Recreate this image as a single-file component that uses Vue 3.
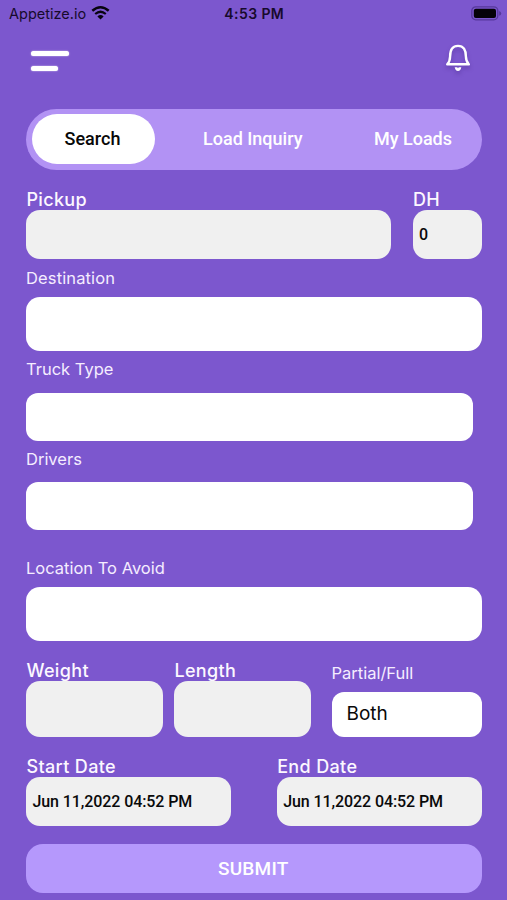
<script setup>
import { ref } from 'vue'

const tabs = ['Search', 'Load Inquiry', 'My Loads']
const activeTab = ref('Search')
</script>

<template>
  <main class="screen">
    <header class="status">
      <div class="carrier">
        <span>Appetize.io</span>
        <svg class="wifi" width="19" height="14" viewBox="0 0 19 14">
          <path d="M1.3 4.8Q9.5 -2.2 17.7 4.8" fill="none" stroke="#08040f" stroke-width="2.5" />
          <path d="M4.2 8Q9.5 3.5 14.8 8" fill="none" stroke="#08040f" stroke-width="2.2" />
          <path d="M6.4 10.4Q9.5 7.8 12.6 10.4L9.5 13.6Z" fill="#08040f" />
        </svg>
      </div>
      <span class="time">4:53 PM</span>
      <svg class="battery" width="31" height="15" viewBox="0 0 31 15">
        <rect x="0.8" y="0.8" width="26" height="13" rx="4" fill="none" stroke="#56399b" stroke-width="1.3" />
        <rect x="2.8" y="2.7" width="22.2" height="9.2" rx="2" fill="#050208" />
        <path d="M28.2 5v4.8q2-.8 2-2.4t-2-2.4z" fill="#56399b" />
      </svg>
    </header>

    <nav class="toolbar">
      <button class="menu" aria-label="Menu"><i></i><i></i></button>
      <svg class="bell" width="28" height="32" viewBox="0 0 28 32">
        <path d="M3.2 21.3Q6 18.500 6.100 13.500C6.100 7 8.400 2.900 14 2.900S21.900 7 21.900 13.500Q22 18.500 24.800 21.300Z" fill="none" stroke="#fff" stroke-width="2.4" stroke-linejoin="round" />
        <path d="M10.7 24.300H17.300Q16.700 28 14 28T10.700 24.300Z" fill="#fff" />
        <path d="M12.7 24.200H15.300L14 25.300Z" fill="#7c57ce" />
      </svg>
    </nav>

    <div class="tabs">
      <button v-for="tab in tabs" :key="tab" :class="['tab', { active: tab === activeTab }]" @click="activeTab = tab">
        {{ tab }}
      </button>
    </div>

    <form @submit.prevent>
      <div class="row pickup-row">
        <div class="field pickup">
          <label class="strong">Pickup</label>
          <div class="box grey"></div>
        </div>
        <div class="field dh">
          <label class="strong">DH</label>
          <div class="box grey">0</div>
        </div>
      </div>

      <div class="field destination">
        <label>Destination</label>
        <div class="box white"></div>
      </div>
      <div class="field select">
        <label>Truck Type</label>
        <div class="box white"></div>
      </div>
      <div class="field select">
        <label>Drivers</label>
        <div class="box white"></div>
      </div>
      <div class="field location">
        <label>Location To Avoid</label>
        <div class="box white"></div>
      </div>

      <div class="row size-row">
        <div class="field size">
          <label class="strong">Weight</label>
          <div class="box grey"></div>
        </div>
        <div class="field size">
          <label class="strong">Length</label>
          <div class="box grey"></div>
        </div>
        <div class="field load">
          <label>Partial/Full</label>
          <div class="box white">Both</div>
        </div>
      </div>

      <div class="row date-row">
        <div class="field">
          <label class="strong">Start Date</label>
          <div class="box grey">Jun 11,2022 04:52 PM</div>
        </div>
        <div class="field">
          <label class="strong">End Date</label>
          <div class="box grey">Jun 11,2022 04:52 PM</div>
        </div>
      </div>

      <button class="submit" type="submit">SUBMIT</button>
    </form>
  </main>
</template>

<style>
body {
  background: #7c57ce;
}
</style>

<style scoped>
* {
  box-sizing: border-box;
}
.screen {
  height: 900px;
  overflow: hidden;
  padding: 0 25.5px 0 26px;
  background: #7c57ce;
  font-family: Inter, "Liberation Sans", sans-serif;
  color: #fff;
}
button {
  border: 0;
  padding: 0;
  background: none;
  font: inherit;
  color: inherit;
}
.status {
  display: grid;
  grid-template-columns: 1fr auto 1fr;
  align-items: center;
  height: 27px;
  margin: 0 -19px 0 -17px;
  color: #170a2c;
  font-size: 14.5px;
}
.carrier {
  display: flex;
  align-items: center;
  gap: 5px;
}
.time {
  padding-right: 1px;
  font-size: 14px;
  font-weight: 600;
  letter-spacing: 0.4px;
}
.wifi {
  margin-top: -1px;
}
.battery {
  justify-self: end;
  margin-right: -1px;
}
.toolbar {
  display: flex;
  justify-content: space-between;
  height: 81.5px;
  padding: 15.7px 10px 0 4px;
}
.menu {
  display: flex;
  flex-direction: column;
  gap: 10px;
  width: 40px;
  height: 35px;
  padding: 8px 0 0 1px;
}
.menu i {
  width: 38px;
  height: 5px;
  border-radius: 3px;
  background: #fff;
  box-shadow: 0 0 1.5px #f4ecff;
}
.menu i + i {
  width: 27px;
}
.bell {
  filter: drop-shadow(0 3px 2px rgba(50, 20, 110, 0.3));
}
.tabs {
  display: flex;
  align-items: center;
  height: 61px;
  padding: 0 6px 1px;
  border-radius: 31px;
  background: #b292f4;
  font-family: Roboto, sans-serif;
  font-size: 18px;
  font-weight: 500;
  letter-spacing: 0.1px;
}
.tab {
  flex: 0 0 123px;
  height: 50px;
  padding: 0 2px 1px 0;
  border-radius: 25px;
}
.tab:nth-child(2) {
  flex: 1;
  padding-right: 0;
}
.tab:nth-child(3) {
  flex: 0 0 125px;
  padding-right: 0;
}
.active {
  background: #fff;
  color: #080808;
}
.row {
  display: flex;
}
.field {
  display: flex;
  flex-direction: column;
}
label {
  display: block;
  height: 38px;
  line-height: 38px;
  font-size: 16.5px;
  white-space: nowrap;
  color: #f5edff;
}
.strong {
  height: 22px;
  padding-left: 0.4px;
  line-height: 23px;
  font-size: 18px;
  font-weight: 500;
  letter-spacing: 0.36px;
  color: #fcf8ff;
}
.box {
  display: flex;
  align-items: center;
  height: 54px;
  border-radius: 14px;
  background: #fff;
  color: #090909;
  white-space: nowrap;
}
.grey {
  height: 49px;
  padding-left: 6.5px;
  background: #f0f0f0;
  font-family: Roboto, sans-serif;
  font-size: 16px;
  font-weight: 500;
  letter-spacing: -0.09px;
}
.pickup-row {
  justify-content: space-between;
  margin-top: 18.5px;
}
.pickup {
  width: 364.5px;
}
.dh {
  width: 69px;
}
.pickup-row label {
  height: 22px;
}
.destination {
  height: 92px;
}
.destination label {
  letter-spacing: 0.13px;
}
.select {
  width: 447px;
  height: 89.5px;
}
.select label {
  height: 42px;
  line-height: 36px;
}
.select .box {
  height: 48px;
  border-radius: 12px;
}
.location {
  padding-top: 18.5px;
}
.size-row {
  align-items: flex-end;
  height: 96px;
}
.size {
  width: 137px;
  margin-right: 11px;
}
.size .box {
  height: 56px;
}
.size .strong {
  line-height: 24px;
}
.load {
  flex: 1;
  margin-left: 9.5px;
}
.load .box {
  height: 45px;
  padding: 0 15px 2px;
  border-radius: 12px;
  font-size: 19px;
}
.date-row {
  gap: 46px;
  padding-top: 18.5px;
}
.date-row .strong {
  line-height: 24px;
}
.date-row .field {
  flex: 1;
}
.submit {
  display: block;
  width: 100%;
  height: 49px;
  margin-top: 18px;
  padding-right: 1px;
  border-radius: 17px;
  background: #b598fc;
  font-family: Roboto, sans-serif;
  font-size: 19px;
  font-weight: 500;
  letter-spacing: 0.2px;
}
</style>
